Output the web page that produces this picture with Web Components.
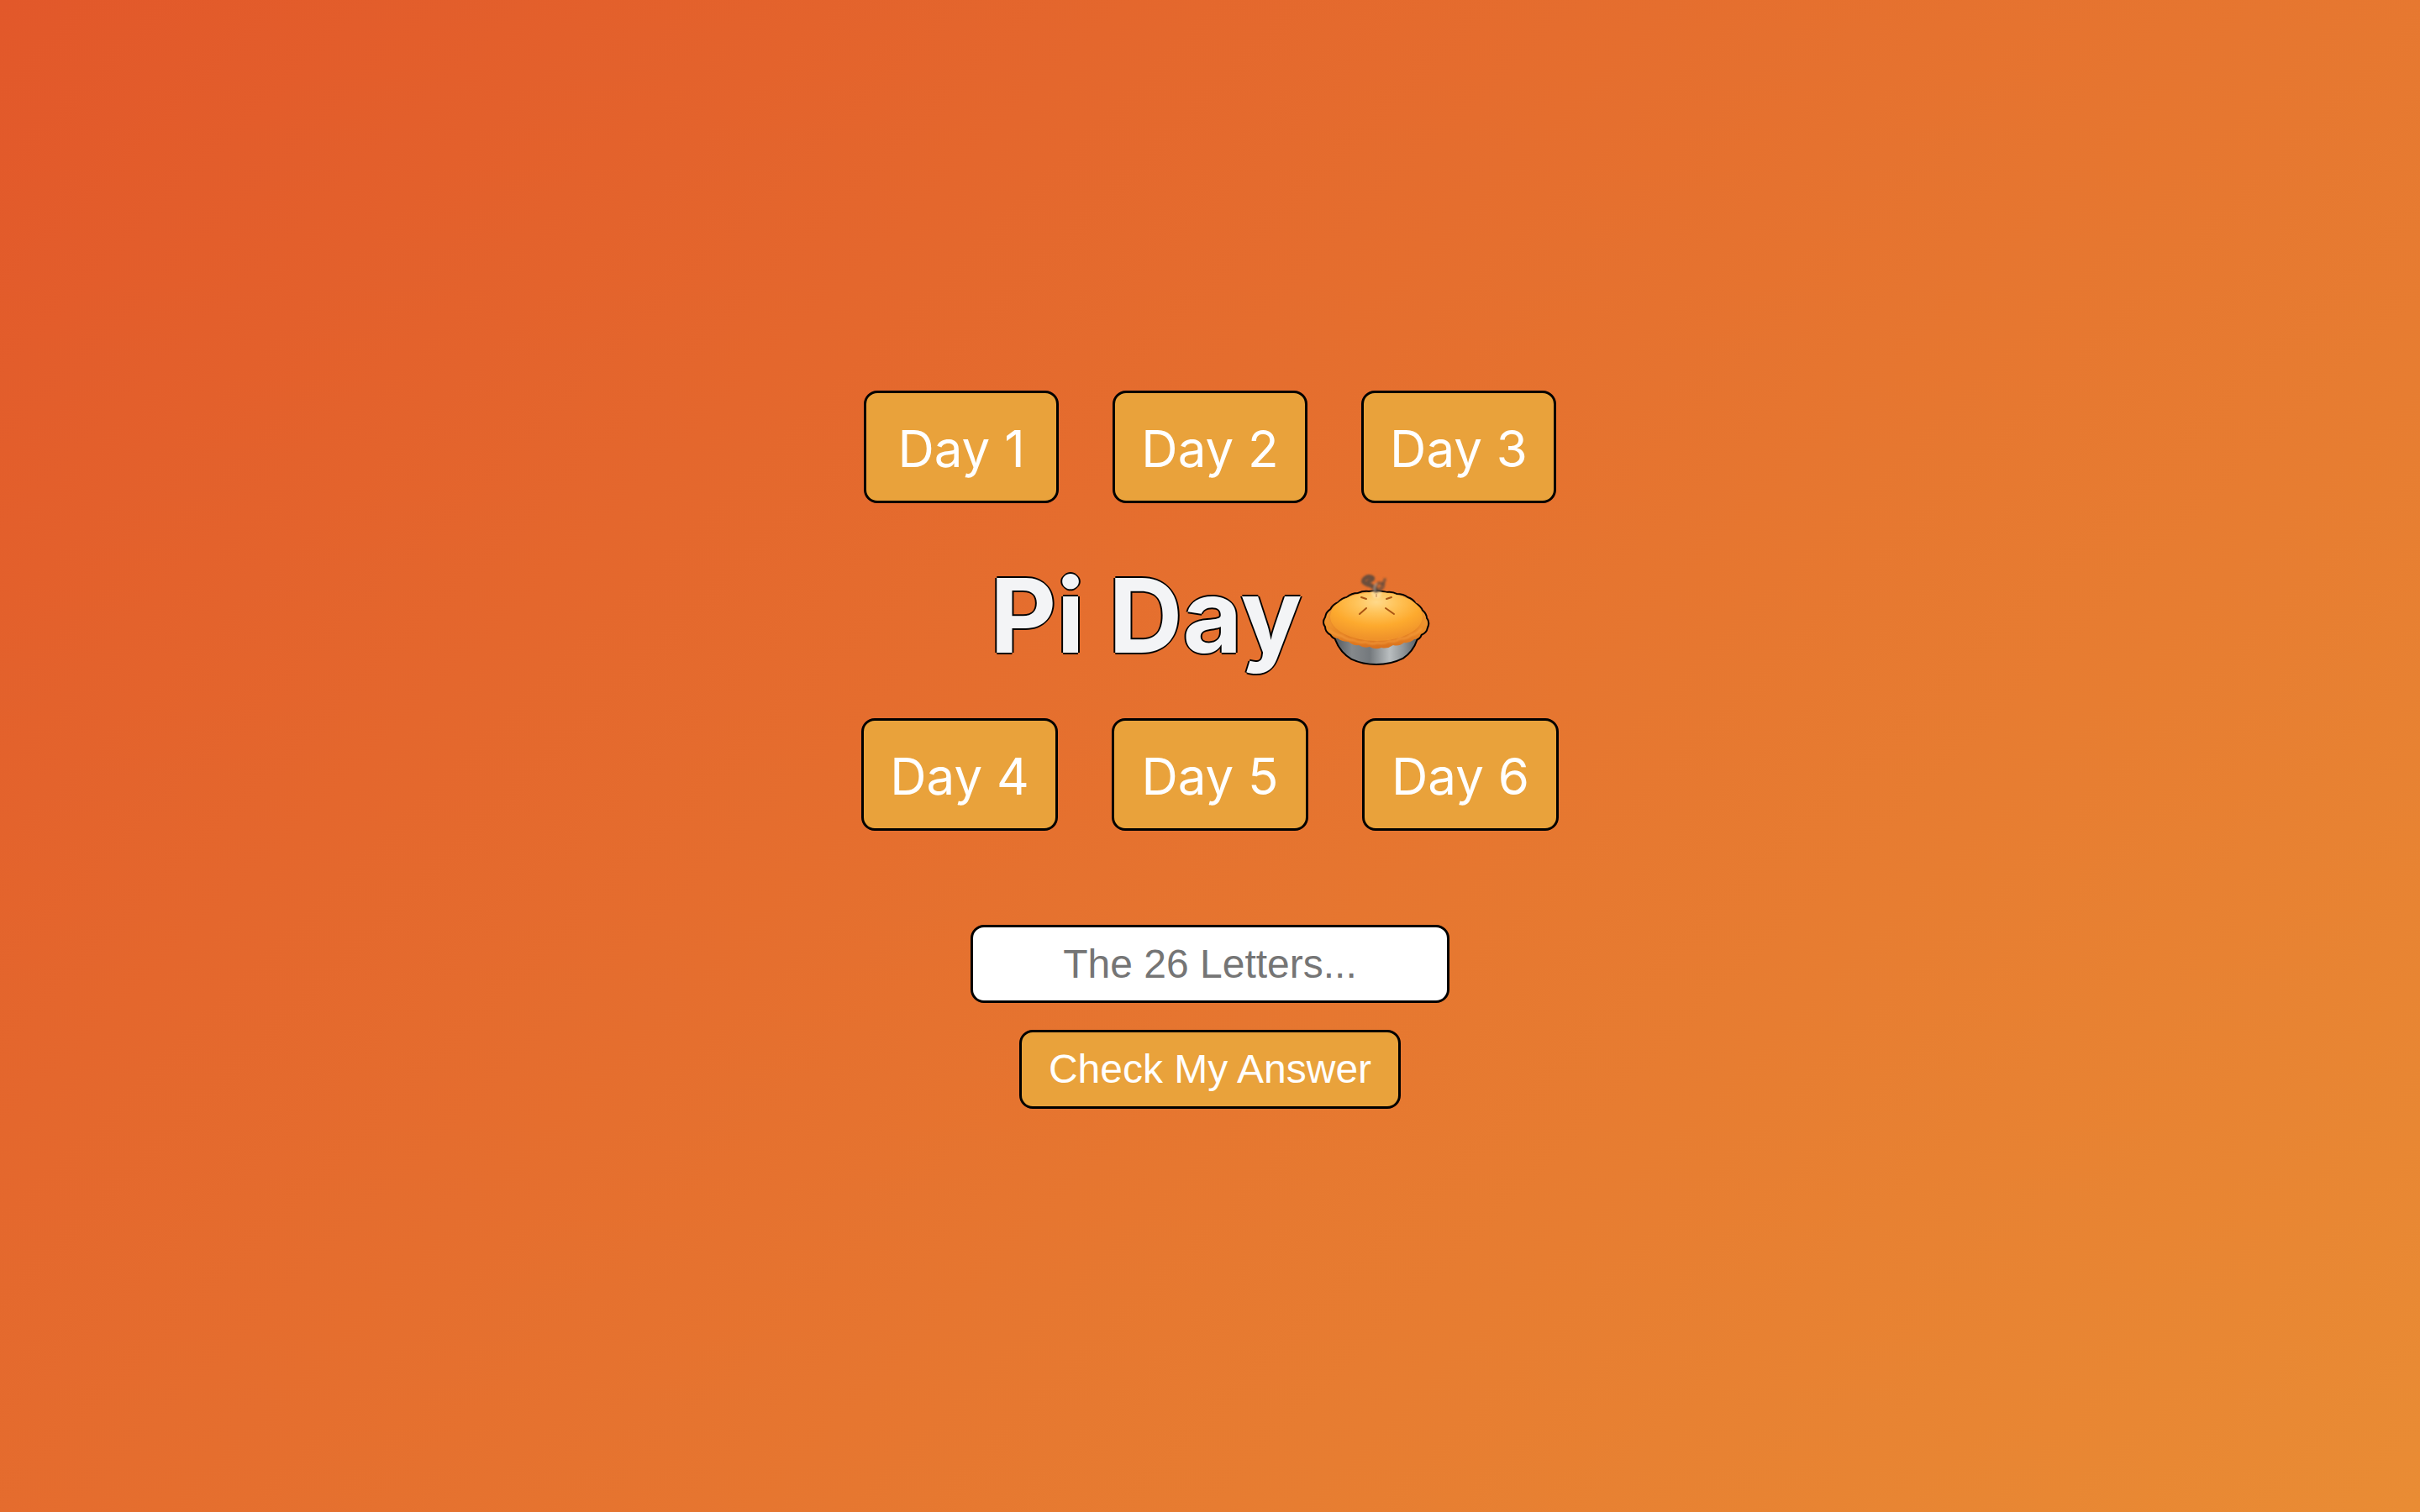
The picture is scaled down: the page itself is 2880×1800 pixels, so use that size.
<!DOCTYPE html>
<html lang="en">
<head>
<meta charset="utf-8">
<title>Pi Day</title>
<style>
  html, body { margin: 0; min-height: 100%; }
  body { font-family: Inter, "Liberation Sans", sans-serif; background: #e5732f; }
</style>
</head>
<body>
<pi-day-app></pi-day-app>
<script>
class DayCard extends HTMLElement {
  constructor() {
    super();
    this.attachShadow({ mode: "open" }).innerHTML = `
      <style>
        :host { display: block; }
        button {
          display: block; width: 100%; padding: 30px 0 26px; box-sizing: border-box;
          font: 400 60px/72px Inter, "Liberation Sans", sans-serif;
          color: #fff; background: #e9a23b; border: 3px solid #000; border-radius: 16px;
          text-align: center; cursor: pointer; white-space: nowrap;
        }
      </style>
      <button type="button"><slot></slot></button>`;
  }
}
customElements.define("day-card", DayCard);

class DayRow extends HTMLElement {
  constructor() {
    super();
    this.attachShadow({ mode: "open" }).innerHTML = `
      <style>
        :host { display: grid; grid-template-columns: repeat(3, var(--card, 232px)); gap: 64px; justify-content: center; }
      </style>
      <slot></slot>`;
  }
}
customElements.define("day-row", DayRow);

class PieIcon extends HTMLElement {
  constructor() {
    super();
    this.attachShadow({ mode: "open" }).innerHTML = `
      <style>
        :host { display: block; width: 128px; height: 128px; }
        svg { display: block; width: 100%; height: 100%; overflow: visible; }
      </style>
      <svg viewBox="0 -18 128 128" role="img" aria-label="pie">
        <defs>
          <linearGradient id="tin" x1="0" x2="1">
            <stop offset="0" stop-color="#54595d"/><stop offset=".2" stop-color="#85898c"/>
            <stop offset=".42" stop-color="#74797d"/><stop offset=".66" stop-color="#b9bec0"/>
            <stop offset=".82" stop-color="#92979a"/><stop offset="1" stop-color="#595e63"/>
          </linearGradient>
          <linearGradient id="rim" x1="0" x2="0" y1="0" y2="1">
            <stop offset="0" stop-color="#f5a445"/><stop offset=".6" stop-color="#ee912c"/><stop offset="1" stop-color="#d9701c"/>
          </linearGradient>
          <radialGradient id="top" cx=".5" cy=".2" r=".75">
            <stop offset="0" stop-color="#ffd98a"/><stop offset=".3" stop-color="#ffc359"/>
            <stop offset=".65" stop-color="#fdaa2e"/><stop offset="1" stop-color="#f0932a"/>
          </radialGradient>
          <filter id="soft" x="-30%" y="-30%" width="160%" height="160%"><feGaussianBlur stdDeviation="1.3"/></filter>
          <filter id="fine" x="-30%" y="-30%" width="160%" height="160%"><feGaussianBlur stdDeviation=".8"/></filter>
          <path id="pan" d="M15 60 V71 Q20 88 35 97 Q48 103 64 103 Q81 103 95 96 Q109 87 113 69 V60Z"/>
          <path id="crust" d="M64 17 Q72 18 76 19 Q83 18 88 21 Q96 21 101 25 Q107 27 110 32 Q116 35 118 40 Q123 44 123 49 Q127 54 124 60 Q123 66 117 68 Q115 74 109 74 Q104 79 97 78 Q91 83 84 81 Q77 86 70 84 Q63 87 56 83 Q49 85 43 81 Q36 82 31 77 Q23 77 18 73 Q13 73 10 68 Q4 65 4 59 Q0 54 4 48 Q5 42 10 39 Q13 33 19 31 Q23 26 29 25 Q35 20 42 20 Q49 17 55 18Z"/>
        </defs>
        <g fill="#000" stroke="#000" stroke-width="4" stroke-linejoin="round"><use href="#pan"/><use href="#crust"/></g>
        <use href="#pan" fill="url(#tin)"/>
        <use href="#crust" fill="url(#rim)"/>
        <ellipse cx="64" cy="47" rx="55" ry="29" fill="#d8741f" opacity=".5" filter="url(#soft)"/>
        <ellipse cx="64" cy="47" rx="55" ry="29" fill="url(#top)"/>
        <path d="M8 63 Q14 69 23 70 Q29 75 37 75 Q44 79 51 77 Q58 81 65 78 Q73 80 79 76 Q86 78 92 73 Q100 74 105 69 Q113 68 118 61" fill="none" stroke="#ffab48" stroke-width="2" opacity=".6" filter="url(#fine)"/>
        <g stroke="#a95312" stroke-width="2" stroke-linecap="round" fill="none">
          <path d="M46 24 L52 26"/><path d="M82 24 L76 26"/><path d="M64 21 V23"/>
          <path d="M44 44 L52 37"/><path d="M85 44 L75 37"/>
        </g>
        <path d="M57 18 Q64 14 71 18 L68 25 H61Z" fill="#ffe5b2" opacity=".6" filter="url(#soft)"/>
        <g fill="none" stroke="#4c4440" stroke-linecap="round" filter="url(#fine)">
          <path d="M63 16 Q61 10 54 9 Q47 7 49 3 Q53 -2 58 0 Q62 2 57 4 Q52 6 56 9" stroke-width="5" opacity=".8"/>
          <path d="M64 16 Q62 9 67 7 Q73 9 74 3" stroke-width="4" opacity=".55"/>
          <path d="M64 16 Q72 14 72 9" stroke-width="5" opacity=".6"/>
          <path d="M62 16 Q61 11 64 8" stroke="#b3a69d" stroke-width="2" opacity=".7"/>
        </g>
      </svg>`;
  }
}
customElements.define("pie-icon", PieIcon);

class PiTitle extends HTMLElement {
  constructor() {
    super();
    this.attachShadow({ mode: "open" }).innerHTML = `
      <style>
        :host { display: block; }
        h1 {
          margin: 0; display: flex; justify-content: center; align-items: center; gap: 24px;
          font: 700 122px/128px Inter, "Liberation Sans", sans-serif; color: #f3f4f6;
          text-shadow: -2px 0 #000, 0 2px #000, 2px 0 #000, 0 -2px #000;
        }
      </style>
      <h1><slot></slot><pie-icon></pie-icon></h1>`;
  }
}
customElements.define("pi-title", PiTitle);

class AnswerForm extends HTMLElement {
  constructor() {
    super();
    this.attachShadow({ mode: "open" }).innerHTML = `
      <style>
        :host { display: block; }
        form { display: flex; flex-direction: column; align-items: center; gap: 32px; }
        input, button {
          box-sizing: border-box; margin: 0; padding: 16px 32px; border: 3px solid #000; border-radius: 16px;
          font: 400 48px/56px "Liberation Sans", Arial, sans-serif; text-align: center;
        }
        input { width: 570px; height: 93px; background: #fff; color: #000; }
        input::placeholder { color: #757575; opacity: 1; }
        button { background: #e9a23b; color: #fff; cursor: pointer; }
      </style>
      <form onsubmit="return false">
        <input type="text" aria-label="Answer" placeholder="The 26 Letters...">
        <button type="submit">Check My Answer</button>
      </form>`;
  }
}
customElements.define("answer-form", AnswerForm);

class PiDayApp extends HTMLElement {
  constructor() {
    super();
    this.attachShadow({ mode: "open" }).innerHTML = `
      <style>
        :host {
          display: flex; flex-direction: column; justify-content: center;
          min-height: 100vh; box-sizing: border-box; padding-bottom: 16px;
          background: linear-gradient(135deg, #e2582a, #e98c34);
        }
        pi-title { margin: 70px 0 58px; }
        answer-form { margin-top: 112px; }
        .late { --card: 234px; }
      </style>
      <day-row><day-card>Day 1</day-card><day-card>Day 2</day-card><day-card>Day 3</day-card></day-row>
      <pi-title>Pi Day</pi-title>
      <day-row class="late"><day-card>Day 4</day-card><day-card>Day 5</day-card><day-card>Day 6</day-card></day-row>
      <answer-form></answer-form>`;
  }
}
customElements.define("pi-day-app", PiDayApp);
</script>
</body>
</html>
